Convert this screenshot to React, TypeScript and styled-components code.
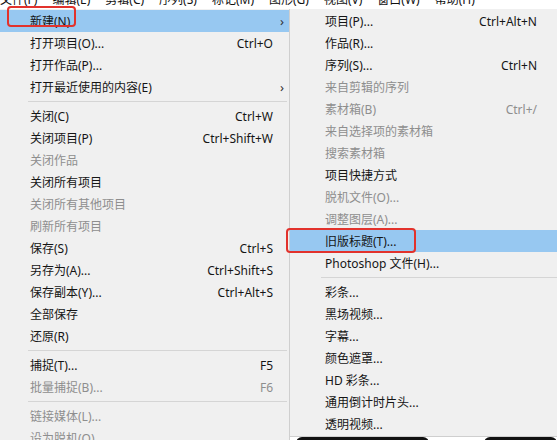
import React from "react"
import styled, { createGlobalStyle } from "styled-components"

const GlobalStyle = createGlobalStyle`
  html, body {
    margin: 0;
    padding: 0;
    background: #ffffff;
    overflow: hidden;
  }
`

const font = `"Noto Sans", "Noto Sans CJK SC", sans-serif`

type Item =
  | "sep"
  | {
      label: string
      shortcut?: string
      sub?: boolean
      disabled?: boolean
      active?: boolean
      mark?: { left: number; top: number; width: number; height: number }
    }

const topMenus = ["文件(F)", "编辑(E)", "剪辑(C)", "序列(S)", "标记(M)", "图形(G)", "视图(V)", "窗口(W)", "帮助(H)"]

const fileMenu: Item[] = [
  { label: "新建(N)", sub: true, active: true, mark: { left: 7, top: -4, width: 69, height: 21 } },
  { label: "打开项目(O)...", shortcut: "Ctrl+O" },
  { label: "打开作品(P)..." },
  { label: "打开最近使用的内容(E)", sub: true },
  "sep",
  { label: "关闭(C)", shortcut: "Ctrl+W" },
  { label: "关闭项目(P)", shortcut: "Ctrl+Shift+W" },
  { label: "关闭作品", disabled: true },
  { label: "关闭所有项目" },
  { label: "关闭所有其他项目", disabled: true },
  { label: "刷新所有项目", disabled: true },
  { label: "保存(S)", shortcut: "Ctrl+S" },
  { label: "另存为(A)...", shortcut: "Ctrl+Shift+S" },
  { label: "保存副本(Y)...", shortcut: "Ctrl+Alt+S" },
  { label: "全部保存" },
  { label: "还原(R)" },
  "sep",
  { label: "捕捉(T)...", shortcut: "F5" },
  { label: "批量捕捉(B)...", shortcut: "F6", disabled: true },
  "sep",
  { label: "链接媒体(L)...", disabled: true },
  { label: "设为脱机(O)...", disabled: true },
]

const newMenu: Item[] = [
  { label: "项目(P)...", shortcut: "Ctrl+Alt+N" },
  { label: "作品(R)..." },
  { label: "序列(S)...", shortcut: "Ctrl+N" },
  { label: "来自剪辑的序列", disabled: true },
  { label: "素材箱(B)", shortcut: "Ctrl+/", disabled: true },
  { label: "来自选择项的素材箱", disabled: true },
  { label: "搜索素材箱", disabled: true },
  { label: "项目快捷方式" },
  { label: "脱机文件(O)...", disabled: true },
  { label: "调整图层(A)...", disabled: true },
  { label: "旧版标题(T)...", active: true, mark: { left: -4, top: -2, width: 130, height: 25 } },
  { label: "Photoshop 文件(H)..." },
  "sep",
  { label: "彩条..." },
  { label: "黑场视频..." },
  { label: "字幕..." },
  { label: "颜色遮罩..." },
  { label: "HD 彩条..." },
  { label: "通用倒计时片头..." },
  { label: "透明视频..." },
]

const Page = styled.div`
  position: relative;
  width: 557px;
  height: 440px;
  overflow: hidden;
  background: #ffffff;
  font-family: ${font};
  font-size: 12px;
  color: #151515;
`

const MenuBar = styled.div`
  height: 9px;
  overflow: hidden;
  display: flex;
  gap: 15px;
  background: #ffffff;
`

const MenuBarItem = styled.div`
  margin-top: -10px;
  line-height: 20px;
  white-space: nowrap;
  color: #111;
`

const Menus = styled.div`
  display: flex;
  align-items: flex-start;
`

const Panel = styled.div<{ $width: number; $pad: number; $arrow: number }>`
  flex: 0 0 auto;
  width: ${p => p.$width}px;
  padding-top: 1px;
  background: #f0f0f0;
  box-sizing: border-box;
  --pad: ${p => p.$pad}px;
  --arrow: ${p => p.$arrow}px;
`

const LeftPanel = styled(Panel)`
  height: 431px;
  border-right: 1px solid #cfcfcf;
`

const SubColumn = styled.div`
  flex: 1;
  min-width: 0;
  display: flex;
  flex-direction: column;
`

const SubPanel = styled(Panel)`
  padding-bottom: 1px;
  border-bottom: 1px solid #cfcfcf;
`

const Row = styled.div<{ $active?: boolean; $disabled?: boolean }>`
  position: relative;
  height: 22px;
  display: grid;
  grid-template-columns: 1fr auto var(--arrow);
  align-items: center;
  padding-left: var(--pad);
  white-space: nowrap;
  background: ${p => (p.$active ? "#97c8f1" : "transparent")};
  color: ${p => (p.$disabled ? "#8e8e8e" : "#151515")};
`

const Shortcut = styled.span`
  text-align: right;
`

const Arrow = styled.span`
  font-size: 13px;
  text-align: center;
  color: #333;
  padding-left: 2px;
`

const Mark = styled.span`
  position: absolute;
  box-sizing: border-box;
  border: 2.5px solid #e2322c;
  border-radius: 4px;
  pointer-events: none;
`

const Separator = styled.div<{ $indent: number; $endGap: number }>`
  height: 7px;
  display: flex;
  align-items: center;
  padding-left: ${p => p.$indent}px;
  padding-right: ${p => p.$endGap}px;

  &::after {
    content: "";
    flex: 1;
    height: 1px;
    background: #d5d5d5;
  }
`

const BottomStrip = styled.div`
  height: 6px;
  display: flex;
  padding-left: 6px;
`

const DarkShape = styled.div<{ $width?: number; $gap: number }>`
  flex: ${p => (p.$width ? `0 0 ${p.$width}px` : "1")};
  margin-right: ${p => p.$gap}px;
  background: #111;
  border-radius: 6px 6px 0 0;
`

const MenuList: React.FC<{ items: Item[]; indent: number; endGap: number }> = ({ items, indent, endGap }) => (
  <>
    {items.map((item, i) =>
      item === "sep" ? (
        <Separator key={i} $indent={indent} $endGap={endGap} />
      ) : (
        <Row key={i} $active={item.active} $disabled={item.disabled}>
          <span>{item.label}</span>
          <Shortcut>{item.shortcut}</Shortcut>
          <Arrow>{item.sub ? "›" : ""}</Arrow>
          {item.mark && (
            <Mark
              style={{
                left: item.mark.left,
                top: item.mark.top,
                width: item.mark.width,
                height: item.mark.height,
              }}
            />
          )}
        </Row>
      )
    )}
  </>
)

const App: React.FC = () => {
  return (
    <>
      <GlobalStyle />
      <Page>
        <MenuBar>
          {topMenus.map(m => (
            <MenuBarItem key={m}>{m}</MenuBarItem>
          ))}
        </MenuBar>
        <Menus>
          <LeftPanel $width={290} $pad={30} $arrow={16}>
            <MenuList items={fileMenu} indent={28} endGap={2} />
          </LeftPanel>
          <SubColumn>
            <SubPanel $width={267} $pad={35} $arrow={20}>
              <MenuList items={newMenu} indent={31} endGap={0} />
            </SubPanel>
            <BottomStrip>
              <DarkShape $width={133} $gap={55} />
              <DarkShape $gap={0} />
            </BottomStrip>
          </SubColumn>
        </Menus>
      </Page>
    </>
  )
}

export default App
